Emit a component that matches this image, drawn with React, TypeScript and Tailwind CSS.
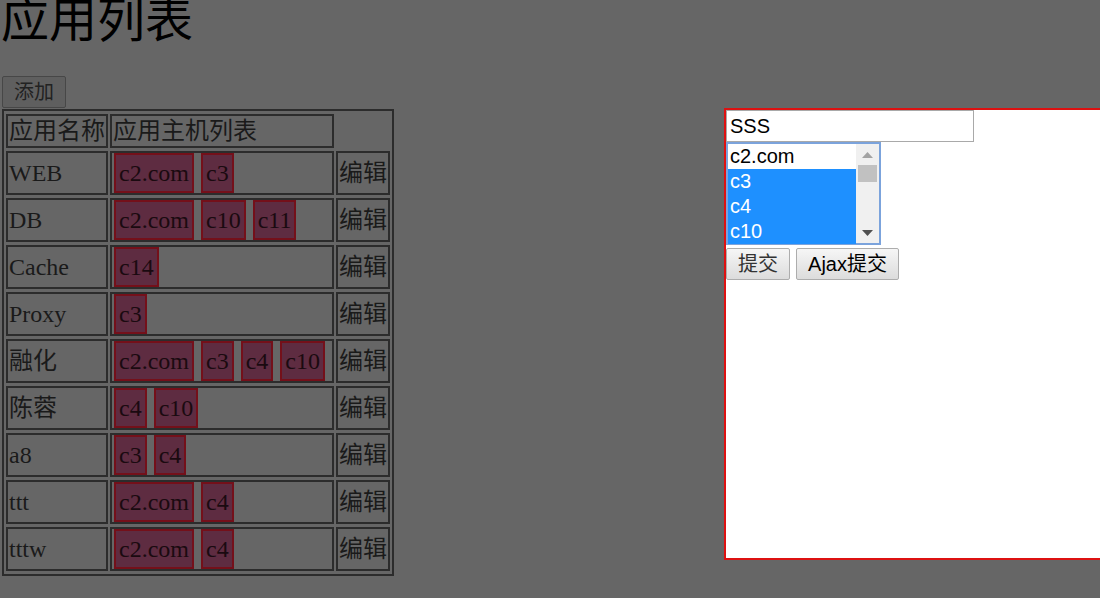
import React from 'react';

interface AppRow {
  name: string;
  hosts: string[];
}

const apps: AppRow[] = [
  { name: 'WEB', hosts: ['c2.com', 'c3'] },
  { name: 'DB', hosts: ['c2.com', 'c10', 'c11'] },
  { name: 'Cache', hosts: ['c14'] },
  { name: 'Proxy', hosts: ['c3'] },
  { name: '融化', hosts: ['c2.com', 'c3', 'c4', 'c10'] },
  { name: '陈蓉', hosts: ['c4', 'c10'] },
  { name: 'a8', hosts: ['c3', 'c4'] },
  { name: 'ttt', hosts: ['c2.com', 'c4'] },
  { name: 'tttw', hosts: ['c2.com', 'c4'] },
];

const hostOptions = [
  { label: 'c2.com', selected: false },
  { label: 'c3', selected: true },
  { label: 'c4', selected: true },
  { label: 'c10', selected: true },
];

const serif = "font-['Liberation_Serif','Noto_Sans_CJK_SC',serif]";
const sans = "font-['Liberation_Sans','Noto_Sans_CJK_SC',sans-serif]";

const HostTag = ({ label }: { label: string }) => (
  <span className="inline-block border-2 border-[#74101a] bg-[#5e2c41] px-[3px] py-1 leading-[28px] text-[#1a0a10]">
    {label}
  </span>
);

const App = () => {
  return (
    <div className={`relative h-[598px] w-[1100px] overflow-hidden bg-[#666666] pl-[2px] text-[24px] text-[#1a1a1a] ${serif}`}>
      <h1 className="-ml-[1px] text-[48px] font-normal leading-[42px] text-black">应用列表</h1>

      <button className="mt-[34px] h-[32px] w-[64px] rounded-[2px] border border-[#474747] bg-[#5f5f5f] text-[20px] text-[#222]">
        添加
      </button>

      {/* app list */}
      <table className="border-separate border-spacing-x-[2px] border-spacing-y-[3px] border-2 border-[#2c2c2c]">
        <tbody>
          <tr>
            <td className="w-[102px] border-2 border-[#2c2c2c] px-[1px] py-0 leading-[30px] whitespace-nowrap">应用名称</td>
            <td className="w-[223px] border-2 border-[#2c2c2c] px-[1px] py-0 leading-[30px] whitespace-nowrap">应用主机列表</td>
          </tr>
          {apps.map(app => (
            <tr key={app.name}>
              <td className="h-[44px] w-[102px] border-2 border-[#2c2c2c] px-[1px] py-0 align-middle whitespace-nowrap">{app.name}</td>
              <td className="h-[44px] w-[224px] border-2 border-[#2c2c2c] py-0 pl-[2px] pr-[1px] align-middle">
                <div className="flex gap-[7px] whitespace-nowrap">
                  {app.hosts.map(h => (
                    <HostTag key={h} label={h} />
                  ))}
                </div>
              </td>
              <td className="h-[44px] w-[54px] border-2 border-[#2c2c2c] px-[1px] py-0 align-middle whitespace-nowrap">编辑</td>
            </tr>
          ))}
        </tbody>
      </table>

      {/* edit dialog */}
      <div className="absolute left-[724px] top-[108px] h-[452px] w-[500px] border-2 border-[#dd1111] bg-white">
        <input
          readOnly
          value="SSS"
          className={`block h-[32px] w-[248px] border border-[#a9a9a9] px-[3px] text-[20px] text-black outline-none ${sans}`}
        />
        <div className={`flex h-[103px] w-[155px] border-2 border-[#7ba3dc] bg-white text-[20px] ${sans}`}>
          <div className="flex-1">
            {hostOptions.map(o => (
              <div
                key={o.label}
                className={
                  o.selected
                    ? 'h-[25px] bg-[#1e90ff] pl-[2px] leading-[25px] text-white'
                    : 'h-[25px] pl-[2px] leading-[25px] text-black'
                }
              >
                {o.label}
              </div>
            ))}
          </div>
          <div className="flex w-[23px] flex-col items-center bg-[#f0f0f0]">
            <div className="flex h-[21px] items-center justify-center">
              <svg width="11" height="6" viewBox="0 0 11 6">
                <path d="M0 6 L5.5 0 L11 6 Z" fill="#a3a3a3" />
              </svg>
            </div>
            <div className="h-[17px] w-[19px] bg-[#c1c1c1]" />
            <div className="flex-1" />
            <div className="flex h-[20px] items-center justify-center">
              <svg width="11" height="6" viewBox="0 0 11 6">
                <path d="M0 0 L11 0 L5.5 6 Z" fill="#505050" />
              </svg>
            </div>
          </div>
        </div>
        <div className="mt-[3px] flex gap-[6px]">
          <button className={`h-[32px] w-[64px] rounded-[2px] border border-[#adadad] bg-gradient-to-b from-[#f6f6f6] to-[#dcdcdc] text-[20px] text-[#333] ${serif}`}>
            提交
          </button>
          <button className={`h-[32px] w-[103px] rounded-[2px] border border-[#adadad] bg-gradient-to-b from-[#f6f6f6] to-[#dcdcdc] text-[20px] text-black ${sans}`}>
            Ajax提交
          </button>
        </div>
      </div>
    </div>
  );
};

export default App;
